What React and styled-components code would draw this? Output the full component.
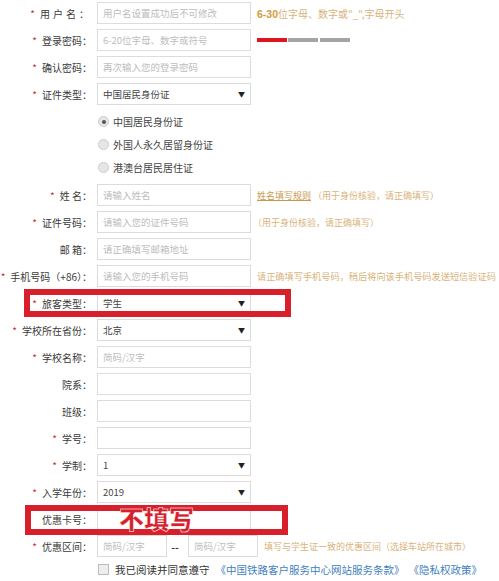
import React from "react";
import styled, { createGlobalStyle } from "styled-components";

const Global = createGlobalStyle`
  html, body { margin: 0; padding: 0; background: #fff; }
  body { font-family: "Noto Sans CJK SC", "Liberation Sans", sans-serif; color: #333; }
`;

const Page = styled.div`
  width: 499px;
  height: 581px;
  overflow: hidden;
  padding-top: 2px;
  box-sizing: border-box;
`;

const Row = styled.div`
  position: relative;
  display: flex;
  align-items: center;
  height: 22px;
  margin-bottom: 5px;
`;

const Label = styled.div`
  width: 92px;
  flex: none;
  text-align: right;
  font-size: 10px;
  color: #3a3a3a;
  white-space: nowrap;
  letter-spacing: ${(p) => (p.$spaced ? "3px" : "0")};
`;

const Star = styled.span`
  color: #c8303a;
  margin-right: 5px;
  letter-spacing: 0;
`;

const Field = styled.div`
  margin-left: 5px;
  width: ${(p) => p.$w || 154}px;
  height: 22px;
  flex: none;
  box-sizing: border-box;
  border: 1px solid #dcdcdc;
  display: flex;
  align-items: center;
  justify-content: space-between;
  padding: 0 5px;
  font-size: 9.5px;
  color: ${(p) => (p.$value ? "#444" : "#bdbdbd")};
  background: #fff;
`;

const Arrow = styled.span`
  font-size: 7px;
  color: #222;
`;

const Hint = styled.div`
  margin-left: ${(p) => p.$ml ?? 6}px;
  font-size: ${(p) => p.$fs || 9}px;
  color: #d9b37a;
  white-space: nowrap;
`;

const Strong = styled.b`
  color: #d69a3a;
  font-family: "Liberation Sans", sans-serif;
  font-size: 10.5px;
`;

const Rule = styled.span`
  text-decoration: underline;
  color: #c99a4e;
`;

const Strength = styled.div`
  margin-left: 6px;
  display: flex;
  gap: 1px;
`;

const Bar = styled.div`
  width: 30px;
  height: 4px;
  background: ${(p) => p.$c};
  margin-right: ${(p) => p.$mr || 0}px;
`;

const Radios = styled.div`
  padding-left: 97px;
  margin-top: 3px;
  margin-bottom: 5px;
`;

const RadioRow = styled.div`
  display: flex;
  align-items: center;
  height: 23px;
  font-size: 10px;
  color: #444;
`;

const RadioDot = styled.span`
  width: 9px;
  height: 9px;
  border-radius: 50%;
  border: 1px solid #ccc;
  background: #e6e6e6;
  margin: 0 4px 0 1px;
  display: flex;
  align-items: center;
  justify-content: center;
  &::after {
    content: "";
    width: 4px;
    height: 4px;
    border-radius: 50%;
    background: ${(p) => (p.$on ? "#555" : "transparent")};
  }
`;

const Overlay = styled.div`
  position: absolute;
  left: ${(p) => p.$l}px;
  top: ${(p) => p.$t}px;
  width: ${(p) => p.$w}px;
  height: ${(p) => p.$h}px;
  box-sizing: border-box;
  border: 6px solid #d7202c;
  pointer-events: none;
`;

const Stamp = styled.div`
  position: absolute;
  left: 119px;
  top: -3px;
  font-size: 25px;
  font-weight: 900;
  line-height: 27px;
  color: #d7202c;
  -webkit-text-stroke: 0.5px #fff;
`;

const Dash = styled.span`
  width: 16px;
  flex: none;
  text-align: center;
  font-size: 10px;
  font-weight: bold;
  color: #333;
`;

const Agree = styled.div`
  display: flex;
  align-items: center;
  padding-left: 98px;
  margin-top: 0;
  font-size: 10.5px;
  color: #333;
  white-space: nowrap;
`;

const Check = styled.span`
  width: 9px;
  height: 9px;
  border: 1px solid #bbb;
  background: #eee;
  margin-right: 6px;
`;

const Link = styled.span`
  color: #3f7fc0;
  margin-left: ${(p) => p.$ml || 0}px;
`;

const F = ({ label, star = true, spaced }) => (
  <Label $spaced={spaced}>
    {star && <Star>*</Star>}
    {label}
  </Label>
);

export default function App() {
  return (
    <Page>
      <Global />
      <Row>
        <F label="用户名：" spaced />
        <Field>用户名设置成功后不可修改</Field>
        <Hint $fs={10}>
          <Strong>6-30</Strong>位字母、数字或"_",字母开头
        </Hint>
      </Row>
      <Row>
        <F label="登录密码：" />
        <Field>6-20位字母、数字或符号</Field>
        <Strength>
          <Bar $c="#e0141b" />
          <Bar $c="#a5a5a5" $mr={1} />
          <Bar $c="#a5a5a5" />
        </Strength>
      </Row>
      <Row>
        <F label="确认密码：" />
        <Field>再次输入您的登录密码</Field>
      </Row>
      <Row>
        <F label="证件类型：" />
        <Field $value>
          中国居民身份证<Arrow>▼</Arrow>
        </Field>
      </Row>
      <Radios>
        <RadioRow>
          <RadioDot $on />
          中国居民身份证
        </RadioRow>
        <RadioRow>
          <RadioDot />
          外国人永久居留身份证
        </RadioRow>
        <RadioRow>
          <RadioDot />
          港澳台居民居住证
        </RadioRow>
      </Radios>
      <Row>
        <F label="姓 名：" />
        <Field>请输入姓名</Field>
        <Hint>
          <Rule>姓名填写规则</Rule> （用于身份核验，请正确填写）
        </Hint>
      </Row>
      <Row>
        <F label="证件号码：" />
        <Field>请输入您的证件号码</Field>
        <Hint $ml={2}>（用于身份核验，请正确填写）</Hint>
      </Row>
      <Row>
        <F label="邮 箱：" star={false} />
        <Field>请正确填写邮箱地址</Field>
      </Row>
      <Row>
        <F label="手机号码（+86）：" />
        <Field>请输入您的手机号码</Field>
        <Hint $fs={9.2}>请正确填写手机号码，稍后将向该手机号码发送短信验证码</Hint>
      </Row>
      <Row>
        <F label="旅客类型：" />
        <Field $value>
          学生<Arrow>▼</Arrow>
        </Field>
        <Overlay $l={24} $t={-3} $w={267} $h={28} />
      </Row>
      <Row>
        <F label="学校所在省份：" />
        <Field $value>
          北京<Arrow>▼</Arrow>
        </Field>
      </Row>
      <Row>
        <F label="学校名称：" />
        <Field>简码/汉字</Field>
      </Row>
      <Row>
        <F label="院系：" star={false} />
        <Field />
      </Row>
      <Row>
        <F label="班级：" star={false} />
        <Field />
      </Row>
      <Row>
        <F label="学号：" />
        <Field />
      </Row>
      <Row>
        <F label="学制：" />
        <Field $value>
          1<Arrow>▼</Arrow>
        </Field>
      </Row>
      <Row>
        <F label="入学年份：" />
        <Field $value>
          2019<Arrow>▼</Arrow>
        </Field>
      </Row>
      <Row>
        <F label="优惠卡号：" star={false} />
        <Field />
        <Overlay $l={25} $t={-3} $w={263} $h={30} />
        <Stamp>不填写</Stamp>
      </Row>
      <Row>
        <F label="优惠区间：" />
        <Field $w={70}>简码/汉字</Field>
        <Dash>--</Dash>
        <Field $w={70}>简码/汉字</Field>
        <Hint>填写与学生证一致的优惠区间（选择车站所在城市）</Hint>
      </Row>
      <Agree>
        <Check />
        我已阅读并同意遵守
        <Link $ml={6}>《中国铁路客户服务中心网站服务条款》</Link>
        <Link $ml={4}>《隐私权政策》</Link>
      </Agree>
    </Page>
  );
}
